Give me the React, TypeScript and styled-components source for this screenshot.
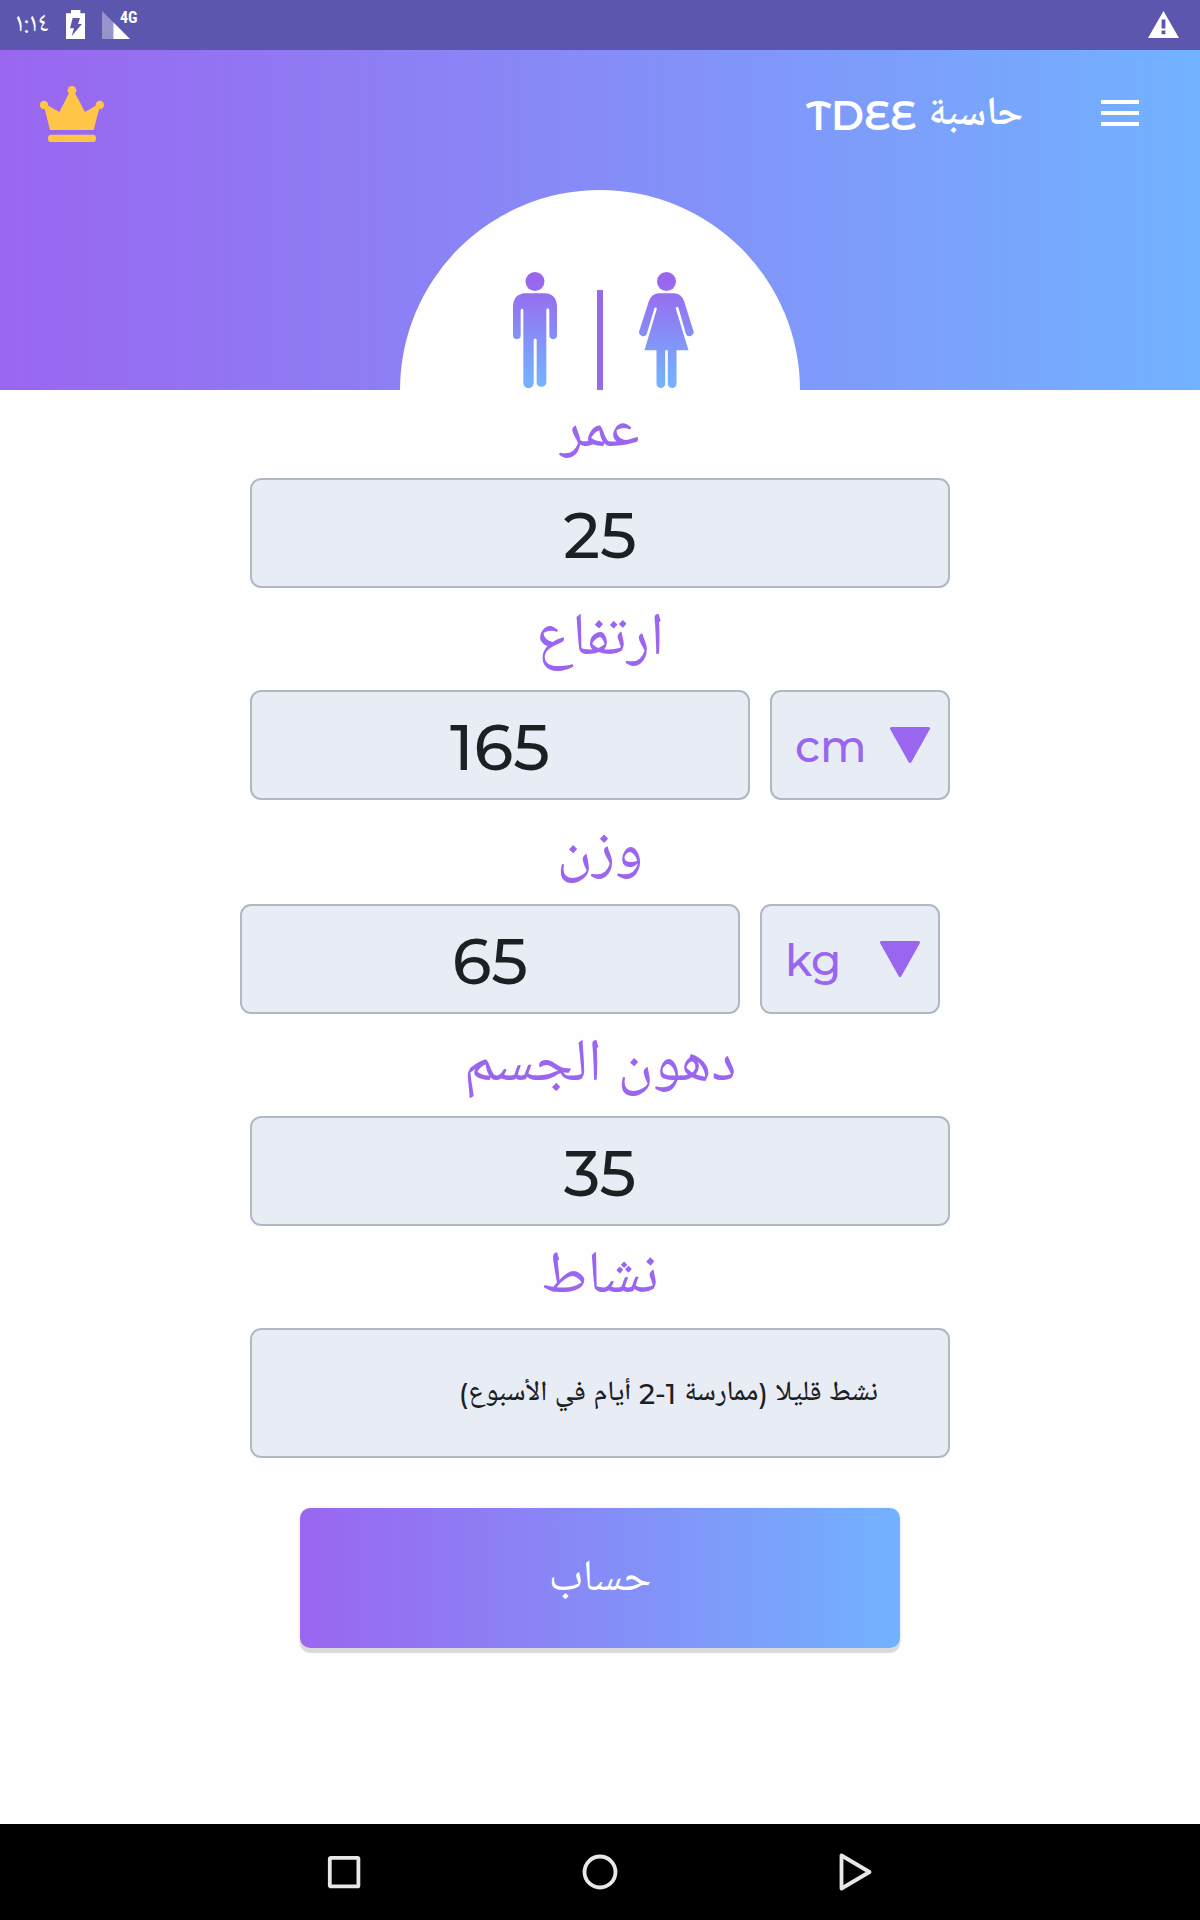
import React from 'react';
import styled, { createGlobalStyle } from 'styled-components';

const arabic = '"Noto Naskh Arabic UI", "Noto Naskh Arabic", "Noto Sans", "DejaVu Sans", sans-serif';
const bodyFont = `Montserrat, ${arabic}`;
const titleFont = `"Montserrat Alternates", Montserrat, ${arabic}`;

const purple = '#9a66f0';
const sky = '#72b2ff';
const brandGradient = `linear-gradient(90deg, ${purple} 0%, ${sky} 100%)`;

const GlobalStyle = createGlobalStyle`
  *, *::before, *::after { box-sizing: border-box; }
  body { margin: 0; background: #fff; font-family: ${bodyFont}; }
  svg { display: block; flex: none; }
`;

const Screen = styled.div`
  display: flex;
  flex-direction: column;
  width: 1200px;
  height: 1920px;
  overflow: hidden;
  background: #fefefe;
`;

const StatusBar = styled.div`
  display: flex;
  align-items: flex-start;
  height: 50px;
  padding: 10px 21px 0 15px;
  background: #5d56ae;
  color: #fff;
`;

const Clock = styled.span`
  width: 51px;
  padding-top: 3px;
  font: 400 27px/24px ${arabic};
  white-space: nowrap;
`;

const Network = styled.div`
  display: flex;
  align-items: flex-start;
  margin-inline-start: 17px;
  margin-inline-end: auto;
`;

const NetworkType = styled.span`
  margin-inline-start: -10px;
  font: 700 16px/16px "Roboto Condensed", Roboto, sans-serif;
`;

const Header = styled.header`
  display: flex;
  flex-direction: column;
  justify-content: space-between;
  align-items: center;
  height: 340px;
  background: ${brandGradient};
`;

const Toolbar = styled.div`
  display: flex;
  align-items: center;
  width: 100%;
  height: 126px;
  padding: 0 61px 0 40px;
`;

const Title = styled.h1`
  margin: 5px 78px 0 auto;
  color: #fff;
  font: 600 40px/50px ${titleFont};
  white-space: nowrap;
`;

const MenuButton = styled.button`
  display: flex;
  flex-direction: column;
  gap: 7px;
  width: 38px;
  padding: 0;
  border: 0;
  background: none;
`;

const MenuLine = styled.span`
  height: 4px;
  background: #fff;
`;

const GenderDome = styled.div`
  display: grid;
  grid-template-columns: 1fr 6px 1fr;
  align-items: end;
  width: 400px;
  height: 200px;
  border-radius: 200px 200px 0 0;
  background: #fefefe;
`;

const GenderOption = styled.div<{ $side: 'male' | 'female' }>`
  display: flex;
  justify-content: ${p => (p.$side === 'male' ? 'flex-end' : 'flex-start')};
  padding: ${p => (p.$side === 'male' ? '0 40.500px 2px 0' : '0 0 2px 35.500px')};
`;

const Divider = styled.span`
  height: 100px;
  background: #9569e8;
`;

const Form = styled.main`
  display: flex;
  flex-direction: column;
  align-items: center;
  flex: 1;
`;

const Label = styled.label<{ $height?: number; $drop?: number }>`
  height: ${p => p.$height ?? 102}px;
  padding-top: ${p => p.$drop ?? 2}px;
  color: ${purple};
  font-size: 60px;
  font-weight: 400;
  line-height: 102px;
  white-space: nowrap;
`;

const FirstLabel = styled(Label)`
  height: 88px;
  padding-top: 0;
  line-height: 86px;
`;

const FieldRow = styled.div<{ $shift?: number }>`
  display: flex;
  gap: 20px;
  width: 700px;
  margin-inline-end: ${p => p.$shift ?? 0}px;
`;

const Box = styled.div`
  display: flex;
  align-items: center;
  height: 110px;
  border: 2px solid #b0b8c2;
  border-radius: 11px;
  background: #e8edf5;
`;

const NumberBox = styled(Box)`
  flex: 1;
  justify-content: center;
  padding-top: 4px;
  color: #1d2022;
  font-size: 64px;
  font-weight: 500;
  line-height: 78px;
`;

const UnitBox = styled(Box)`
  justify-content: space-between;
  width: 180px;
  padding: 0 18px 0 23px;
  color: ${purple};
  font-size: 44px;
  font-weight: 500;
  line-height: 54px;
`;

const UnitName = styled.span`
  padding-top: 1px;
`;

const ActivityBox = styled(Box)`
  flex: 1;
  height: 130px;
  padding: 2px 70px 0;
  color: #1d2022;
  font-size: 28px;
  font-weight: 500;
  line-height: 40px;
  white-space: nowrap;
`;

const Submit = styled.button`
  width: 600px;
  height: 140px;
  margin-top: 50px;
  padding: 4px 0 0;
  border: 0;
  border-radius: 10px;
  background: ${brandGradient};
  box-shadow: 0 5px 1px #dadada, 0 1px 4px rgba(0, 0, 0, 0.1);
  color: #fff;
  font: 400 44px/60px ${bodyFont};
`;

const NavBar = styled.nav`
  display: flex;
  align-items: center;
  justify-content: space-between;
  height: 96px;
  padding: 0 326px;
  background: #000;
`;

const BatteryIcon = () => (
  <svg width="19" height="29" viewBox="198 30 57 87">
    <path fill="#fff" fillRule="evenodd" d="M198 40H213V30H241V40H255V117H198ZM218 54L210 85H222L215 108L246 72H234L240 54Z" />
  </svg>
);

const SignalIcon = () => (
  <svg width="28" height="29" viewBox="306 31 84 87">
    <path fill="#fff" fillOpacity=".36" d="M306 34L340 68V118H306Z" />
    <path fill="#fff" d="M340 68L390 118H340Z" />
  </svg>
);

const WarningIcon = () => (
  <svg width="31" height="28" viewBox="0 0 31 28">
    <path fill="#fff" fillRule="evenodd" d="M15.5 1L31 28H0ZM13.600 9.500V18.500H17.400V9.500ZM13.600 20.500V24.300H17.400V20.500Z" />
  </svg>
);

const CrownIcon = () => (
  <svg width="64" height="58" viewBox="120 252 192 174" fill="#ffc547">
    <circle cx="132" cy="315" r="12.500" />
    <circle cx="216" cy="271" r="13" />
    <circle cx="299.500" cy="315" r="12.500" />
    <path d="M150 390L132 318L140 314L178 336L207 280H225L255 336L292 314L299 320L281 390Z" />
    <rect x="144" y="404" width="144" height="22" rx="10" />
  </svg>
);

const FigureFill = ({ id }: { id: string }) => (
  <linearGradient id={id} gradientUnits="userSpaceOnUse" x1="0" y1="125" x2="0" y2="425">
    <stop offset="0" stopColor="#9a66ee" />
    <stop offset="1" stopColor="#74b1ff" />
  </linearGradient>
);

const ManIcon = () => (
  <svg width="44" height="116" viewBox="218 96 132 348" fill="url(#man)">
    <FigureFill id="man" />
    <circle cx="284" cy="124.500" r="28.500" />
    <path d="M255 160H313Q350 162 350 202V286A11.500 11.500 0 0 1 327 286V209A4.500 4.500 0 0 0 318 209V429A15 15 0 0 1 289 429V300A4.500 4.500 0 0 0 280 300V429A15 15 0 0 1 249 429V209A4.500 4.500 0 0 0 241 209V286A11.500 11.500 0 0 1 218 286V202Q218 162 255 160Z" />
  </svg>
);

const WomanIcon = () => (
  <svg width="55" height="116" viewBox="26 96 164 348" fill="url(#woman)">
    <FigureFill id="woman" />
    <circle cx="108" cy="124.500" r="28.500" />
    <path d="M84 160H132Q153 162 161 184L188 271A11.500 11.500 0 0 1 166 281L144 204A4 4 0 0 0 136 206L174 331H138V431A13 13 0 0 1 112 431V331H104V431A13 13 0 0 1 78 431V331H42L79 206A4 4 0 0 0 72 204L49 281A11.500 11.500 0 0 1 27 271L55 184Q63 162 84 160Z" />
  </svg>
);

const DropdownIcon = () => (
  <svg width="40" height="36" viewBox="0 0 40 36">
    <path d="M1.500 1.500H38.500L20 34.500Z" fill={purple} stroke={purple} strokeWidth="3" strokeLinejoin="round" />
  </svg>
);

const navStroke = { fill: 'none', stroke: '#e8e8e8', strokeWidth: 3.8, strokeLinejoin: 'round' as const };

export default function App() {
  return (
    <>
      <GlobalStyle />
      <Screen>
        <StatusBar>
          <Clock>١:١٤</Clock>
          <BatteryIcon />
          <Network>
            <SignalIcon />
            <NetworkType>4G</NetworkType>
          </Network>
          <WarningIcon />
        </StatusBar>

        <Header>
          <Toolbar>
            <CrownIcon />
            <Title dir="rtl">حاسبة TDEE</Title>
            <MenuButton aria-label="القائمة">
              <MenuLine />
              <MenuLine />
              <MenuLine />
            </MenuButton>
          </Toolbar>
          <GenderDome>
            <GenderOption $side="male"><ManIcon /></GenderOption>
            <Divider />
            <GenderOption $side="female"><WomanIcon /></GenderOption>
          </GenderDome>
        </Header>

        <Form>
          <FirstLabel>عمر</FirstLabel>
          <FieldRow>
            <NumberBox>25</NumberBox>
          </FieldRow>

          <Label>ارتفاع</Label>
          <FieldRow>
            <NumberBox>165</NumberBox>
            <UnitBox><UnitName>cm</UnitName><DropdownIcon /></UnitBox>
          </FieldRow>

          <Label $height={104} $drop={3}>وزن</Label>
          <FieldRow $shift={20}>
            <NumberBox>65</NumberBox>
            <UnitBox><UnitName>kg</UnitName><DropdownIcon /></UnitBox>
          </FieldRow>

          <Label>دهون الجسم</Label>
          <FieldRow>
            <NumberBox>35</NumberBox>
          </FieldRow>

          <Label>نشاط</Label>
          <FieldRow>
            <ActivityBox dir="rtl">نشط قليلا (ممارسة 1-2 أيام في الأسبوع)</ActivityBox>
          </FieldRow>

          <Submit>حساب</Submit>
        </Form>

        <NavBar>
          <svg width="36" height="40" viewBox="0 0 36 40">
            <rect x="3.800" y="5.800" width="28.600" height="28.600" rx="1" {...navStroke} />
          </svg>
          <svg width="36" height="40" viewBox="0 0 36 40">
            <circle cx="18" cy="20" r="15.500" {...navStroke} />
          </svg>
          <svg width="36" height="40" viewBox="0 0 36 40">
            <path d="M3.500 3.500V36.500L31.500 20Z" {...navStroke} />
          </svg>
        </NavBar>
      </Screen>
    </>
  );
}
